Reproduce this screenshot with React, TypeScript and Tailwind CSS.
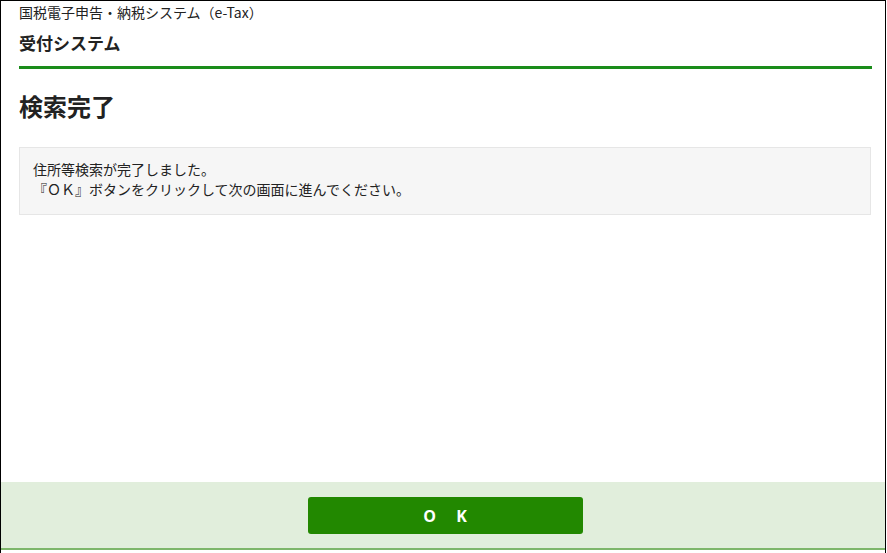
export default function App() {
  return (
    <div
      className="w-[887px] h-[553px] bg-white overflow-hidden"
      style={{ fontFamily: '"Noto Sans CJK JP", "Noto Sans", sans-serif' }}
    >
      <div className="w-[886px] h-[553px] border-l border-t border-r border-black flex flex-col text-[#222]">
        {/* ヘッダー */}
        <div className="pl-[18px] pr-[13px]">
          <div className="text-[14px] leading-[20px] pt-[1px]">国税電子申告・納税システム（e-Tax）</div>
          <div className="text-[17px] font-bold leading-[24px] mt-[9px]">受付システム</div>
          <div className="h-[3px] bg-[#1a8c1a] mt-[11px]" />
        </div>

        {/* 本文 */}
        <div className="flex-1 pl-[18px] pr-[13px]">
          <h1 className="text-[24px] font-bold leading-[32px] mt-[21px]">検索完了</h1>
          <div className="mt-[25px] mr-[1px] bg-[#f6f6f6] border border-[#e6e6e6] px-[13px] pt-[11px] pb-[15px] text-[14px] leading-[20px]">
            <p>住所等検索が完了しました。</p>
            <p>『ＯＫ』ボタンをクリックして次の画面に進んでください。</p>
          </div>
        </div>

        {/* フッター */}
        <div className="h-[68px] mb-[3px] bg-[#e1eedc] border-b-[2px] border-[#7db66b] flex justify-center pt-[15px] pl-[4px]">
          <button
            className="w-[275px] h-[37px] rounded-[3px] bg-[#228800] text-white font-bold text-[16px] tracking-[0.5em] pl-[0.5em]"
            style={{ fontFamily: '"Open Sans", "Noto Sans", sans-serif' }}
          >
            O K
          </button>
        </div>
      </div>
    </div>
  );
}
